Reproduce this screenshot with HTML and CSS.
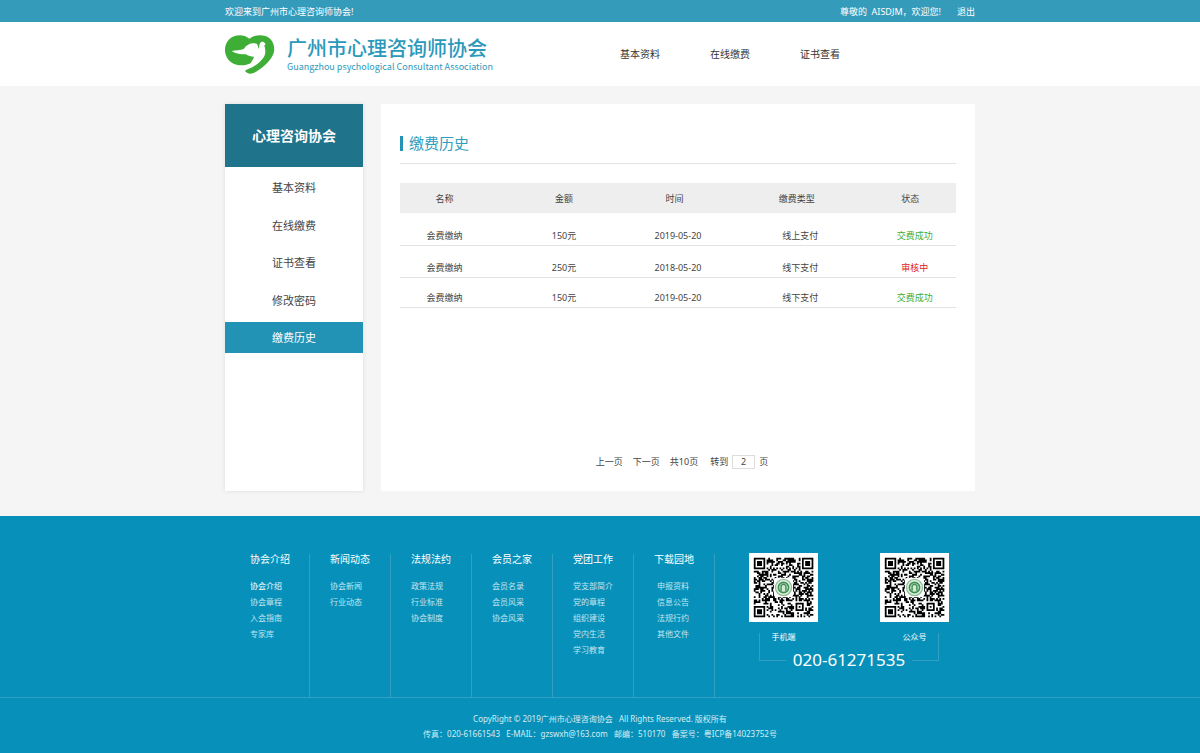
FILE: index.html
```html
<!DOCTYPE html>
<html lang="zh-CN">
<head>
<meta charset="utf-8">
<meta name="viewport" content="width=device-width, initial-scale=1">
<title>缴费历史 - 广州市心理咨询师协会</title>
<link rel="stylesheet" href="styles.css">
</head>
<body>
<div class="topbar">
  <div class="container topbar-row">
    <span>欢迎来到广州市心理咨询师协会!</span>
    <div class="user"><span>尊敬的&nbsp; AISDJM，欢迎您!</span><a href="#">退出</a></div>
  </div>
</div>
<header class="header">
  <div class="container header-row">
    <a class="brand" href="#">
      <svg class="brand-mark" viewBox="0 0 150 117" aria-hidden="true">
        <path fill="#3fae36" d="M73 11C60 0 42-2 27 4C9 11 0 27 0 44C0 66 14 84 35 89C50 93 67 91 84 80C80 90 71 99 60 107C63 113 73 118 83 115C106 105 138 80 146 54C152 33 142 9 121 3C103-2 87 1 73 11Z"/>
        <path fill="#fff" d="M20 48C33 45 47 47 57 41C66 28 78 22 95 26C99 30 99 36 101 42C104 35 102 25 109 21C113 19 118 21 119 24L122 28L118 31C121 42 124 56 115 68C106 80 96 88 82 97L57 107C68 97 76 90 80 79C84 73 86 69 87 65C78 65 69 62 62 58C48 58 32 56 20 48Z"/>
      </svg>
      <span class="brand-text">
        <span class="brand-name">广州市心理咨询师协会</span>
        <span class="brand-sub">Guangzhou psychological Consultant Association</span>
      </span>
    </a>
    <nav class="nav"><a href="#">基本资料</a><a href="#">在线缴费</a><a href="#">证书查看</a></nav>
  </div>
</header>
<div class="container content">
  <aside class="sidebar">
    <h2 class="side-title">心理咨询协会</h2>
    <nav class="side-nav">
      <a href="#">基本资料</a>
      <a href="#">在线缴费</a>
      <a href="#">证书查看</a>
      <a href="#">修改密码</a>
      <a class="active" href="#" aria-current="page">缴费历史</a>
    </nav>
  </aside>
  <main class="panel">
    <h1 class="panel-title">缴费历史</h1>
    <table class="history">
      <colgroup><col class="c-name"><col class="c-amount"><col class="c-date"><col class="c-type"><col></colgroup>
      <thead><tr><th>名称</th><th>金额</th><th>时间</th><th>缴费类型</th><th>状态</th></tr></thead>
      <tbody>
        <tr><td>会费缴纳</td><td>150元</td><td>2019-05-20</td><td>线上支付</td><td class="ok">交费成功</td></tr>
        <tr><td>会费缴纳</td><td>250元</td><td>2018-05-20</td><td>线下支付</td><td class="pending">审核中</td></tr>
        <tr><td>会费缴纳</td><td>150元</td><td>2019-05-20</td><td>线下支付</td><td class="ok">交费成功</td></tr>
      </tbody>
    </table>
    <form class="pager">
      <a href="#">上一页</a>
      <a href="#">下一页</a>
      <span>共10页</span>
      <span class="jump"><label for="page">转到</label><input id="page" type="text" value="2"><span>页</span></span>
    </form>
  </main>
</div>
<footer class="footer">
  <div class="container footer-main">
    <div class="links">
      <section><h3>协会介绍</h3><ul><li><a class="current" href="#">协会介绍</a></li><li><a href="#">协会章程</a></li><li><a href="#">入会指南</a></li><li><a href="#">专家库</a></li></ul></section>
      <section><h3>新闻动态</h3><ul><li><a href="#">协会新闻</a></li><li><a href="#">行业动态</a></li></ul></section>
      <section><h3>法规法约</h3><ul><li><a href="#">政策法规</a></li><li><a href="#">行业标准</a></li><li><a href="#">协会制度</a></li></ul></section>
      <section><h3>会员之家</h3><ul><li><a href="#">会员名录</a></li><li><a href="#">会员风采</a></li><li><a href="#">协会风采</a></li></ul></section>
      <section><h3>党团工作</h3><ul><li><a href="#">党支部简介</a></li><li><a href="#">党的章程</a></li><li><a href="#">组织建设</a></li><li><a href="#">党内生活</a></li><li><a href="#">学习教育</a></li></ul></section>
      <section class="downloads"><h3>下载园地</h3><ul><li><a href="#">申报资料</a></li><li><a href="#">信息公告</a></li><li><a href="#">法规行约</a></li><li><a href="#">其他文件</a></li></ul></section>
    </div>
    <div class="contact">
      <div class="codes">
        <figure><svg class="qr" viewBox="-3 -3 43 43" role="img" aria-label="手机端二维码"></svg><figcaption>手机端</figcaption></figure>
        <figure><svg class="qr" viewBox="-3 -3 43 43" role="img" aria-label="公众号二维码"></svg><figcaption>公众号</figcaption></figure>
      </div>
      <div class="phone"><span>020-61271535</span></div>
    </div>
  </div>
  <div class="legal">
    <p>CopyRight © 2019广州市心理咨询协会 &nbsp; All Rights Reserved. 版权所有</p>
    <p>传真：020-61661543 &nbsp; E-MAIL：gzswxh@163.com &nbsp; 邮编：510170 &nbsp; 备案号：粤ICP备14023752号</p>
  </div>
</footer>
<script src="qr.js"></script>
</body>
</html>
```
FILE: styles.css
```css
* { box-sizing: border-box; }
body {
  margin: 0;
  background: #f5f5f5;
  color: #444;
  font-family: "Noto Sans", "Noto Sans CJK SC", sans-serif;
  font-size: 9px;
  line-height: 14px;
}
a { color: inherit; text-decoration: none; }
h1, h2, h3, p, ul, figure { margin: 0; padding: 0; font-weight: 400; }
ul { list-style: none; }
.container { width: 100%; max-width: 750px; margin: 0 auto; }

.topbar { background: #359bbb; color: #fff; }
.topbar-row { display: flex; justify-content: space-between; padding: 5px 0 3px; }
.user { display: flex; gap: 16px; }

.header { background: #fff; }
.header-row { display: flex; align-items: center; min-height: 64px; }
.brand { display: flex; align-items: center; gap: 12px; width: 395px; color: #2b99bb; }
.brand-mark { width: 50px; height: 39px; }
.brand-text { display: flex; flex-direction: column; padding-top: 2px; white-space: nowrap; }
.brand-name { font-family: "Liberation Sans", "Noto Sans CJK SC", sans-serif; font-size: 20px; font-weight: 500; line-height: 24px; }
.brand-sub { font-family: "Noto Sans CJK SC", sans-serif; font-size: 9px; line-height: 12px; }
.nav { display: flex; gap: 50px; font-size: 10px; color: #333; }

.content { display: flex; align-items: stretch; gap: 18px; padding: 18px 0 25px; min-height: 430px; }
.sidebar { flex: 0 0 138px; background: #fff; box-shadow: 0 0 4px #ddd; }
.side-title { background: #1f738b; color: #fff; font-size: 14px; font-weight: 700; line-height: 63px; text-align: center; }
.side-nav { display: flex; flex-direction: column; justify-content: space-between; min-height: 186px; padding-top: 5px; font-size: 11px; line-height: 31px; text-align: center; }
.side-nav .active { background: #2393b5; color: #fff; }

.panel { flex: 1; display: flex; flex-direction: column; padding: 28px 19px 22px; background: #fff; }
.panel-title { display: flex; align-items: center; gap: 6px; padding-bottom: 9px; border-bottom: 1px solid #e3e3e3; color: #2f9dbe; font-size: 15px; line-height: 22px; }
.panel-title::before { content: ""; width: 3px; height: 15px; background: #2393b5; }
.history { width: 100%; margin-top: 19px; border-collapse: collapse; table-layout: fixed; text-align: center; }
.history th { height: 30px; padding: 2px 0 0; background: #eee; font-weight: 400; }
.history th:nth-child(n+3) { padding-right: 7px; }
.history td { height: 32px; padding: 0 0 2px; border-bottom: 1px solid #e3e3e3; vertical-align: bottom; }
.history tr:last-child td { height: 30px; }
.history th:last-child { padding-right: 19px; }
.history td:last-child { padding-right: 10px; }
.c-name { width: 16%; }
.c-amount { width: 27%; }
.c-date { width: 14%; }
.c-type { width: 30%; }
.ok { color: #3fae36; }
.pending { color: #e01a1a; }
.pager { display: flex; justify-content: center; align-items: center; gap: 10px; margin-top: auto; padding-left: 8px; }
.jump { display: flex; align-items: center; gap: 4px; padding-left: 2px; }
.jump input { width: 23px; height: 14px; padding: 0; border: 1px solid #ddd; background: #fff; color: inherit; font: inherit; text-align: center; }

.footer { min-height: 237px; background: #0791ba; color: #fff; }
.footer-main { display: flex; padding: 37px 0 0 25px; }
.links { display: flex; min-height: 143px; margin-top: 1px; }
.links section { width: 81px; padding-left: 20px; border-right: 1px solid #329fc3; }
.links section:first-child { width: 60px; padding-left: 0; }
.links h3 { font-size: 10px; line-height: 10px; margin-bottom: 14px; }
.links ul { color: #c2e4ee; font-size: 8px; line-height: 16px; }
.downloads ul { padding-left: 3px; }
.links .current { color: #fff; }
.contact { width: 200px; margin-left: 34px; }
.codes { display: flex; justify-content: space-between; }
.codes figure { width: 69px; font-size: 8px; text-align: center; }
.qr { display: block; width: 69px; height: 69px; background: #fff; }
.codes figcaption { padding-top: 8px; }
.phone { display: flex; justify-content: space-between; margin: -11px 10px 0; font-size: 17px; line-height: 24px; }
.phone span { margin-top: 15px; }
.phone::before, .phone::after { content: ""; width: 26px; height: 27px; border: solid #329fc3; border-width: 0 0 1px 1px; }
.phone::after { border-width: 0 1px 1px 0; }
.legal { padding: 13px 0 11px; border-top: 1px solid #329fc3; color: #d5edf4; font-size: 8px; line-height: 15px; text-align: center; }
```
FILE: qr.js
```js
// Draws a 37-module code with finder squares and a round emblem in the centre.
const N = 37;
const corners = [[0, 0], [N - 7, 0], [0, N - 7]];

function dark(x, y) {
  for (const [cx, cy] of corners) {
    const dx = x - cx, dy = y - cy;
    if (dx >= -1 && dx <= 7 && dy >= -1 && dy <= 7) {
      const d = Math.max(Math.abs(dx - 3), Math.abs(dy - 3));
      return d === 3 || d <= 1;
    }
  }
  const a = Math.max(Math.abs(x - 28), Math.abs(y - 30));
  if (a <= 3) return a !== 1 && a !== 3;
  if (x === 6 || y === 6) return (x + y) % 2 === 0;
  let h = (x * 374761393 + y * 668265263) | 0;
  h = Math.imul(h ^ (h >>> 13), 1274126177);
  return ((h ^ (h >>> 16)) & 7) > 3;
}

let d = "";
for (let y = 0; y < N; y++) {
  for (let x = 0; x < N; x++) {
    if (dark(x, y)) d += `M${x} ${y}h1.1v1.1h-1.1z`;
  }
}

document.querySelectorAll(".qr").forEach((svg) => {
  svg.innerHTML = `<path d="${d}" fill="#000"/>
    <rect x="12.5" y="12.5" width="12" height="12" rx="2" fill="#fff"/>
    <circle cx="18.5" cy="18.5" r="5" fill="#e4f0e6" stroke="#8fbd98" stroke-width=".8"/>
    <circle cx="18.5" cy="18.5" r="3.2" fill="#d3e8d6" stroke="#3f9150" stroke-width="1"/>
    <path d="M17 20.5v-3q1.5-2 3 0v3" fill="none" stroke="#3f9150" stroke-width=".9"/>`;
});
```
